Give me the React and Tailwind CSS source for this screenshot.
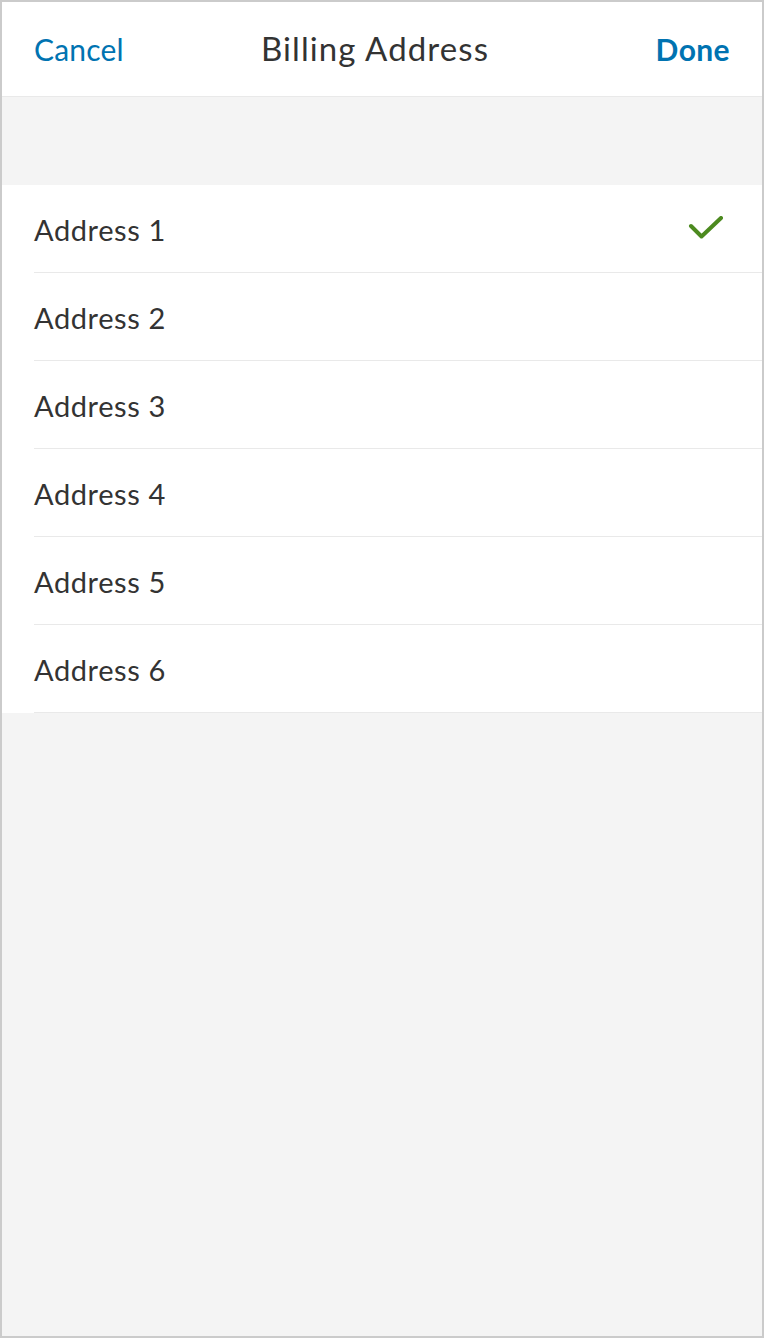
import React from "react";

const rows = ["Address 1", "Address 2", "Address 3", "Address 4", "Address 5", "Address 6"];

export default function App() {
  return (
    <div
      className="w-[764px] h-[1338px] box-border border-2 border-[#cbcbcb] bg-[#f4f4f4] flex flex-col"
      style={{ fontFamily: "Lato, 'Open Sans', sans-serif" }}
    >
      <div className="h-[95px] shrink-0 bg-white border-b border-[#e9e9e9] flex items-center pl-[32px] pr-[32px]">
        <span className="flex-1 text-[30px] text-[#0073b1] tracking-[0.2px]">Cancel</span>
        <span className="mr-[14px] text-[33px] text-[#333333] tracking-[1.1px]">Billing Address</span>
        <span className="flex-1 text-right text-[30px] font-bold text-[#0073b1] tracking-[0.4px]">Done</span>
      </div>
      <div className="h-[88px] shrink-0" />
      <div className="bg-white">
        {rows.map((r, i) => (
          <div key={r} className="pl-[32px]">
            <div className="h-[88px] box-border border-b border-[#e9e9e9] flex items-center justify-between pr-[38px] pt-[2px]">
              <span className="text-[29px] text-[#333333] tracking-[0.6px]">{r}</span>
              {i === 0 && (
                <svg width="36" height="28" viewBox="0 0 36 28">
                  <path
                    d="M3 10 L13.5 20.5 L33 2"
                    fill="none"
                    stroke="#4c8a1f"
                    strokeWidth="4"
                    strokeLinecap="round"
                    strokeLinejoin="round"
                  />
                </svg>
              )}
            </div>
          </div>
        ))}
      </div>
    </div>
  );
}
